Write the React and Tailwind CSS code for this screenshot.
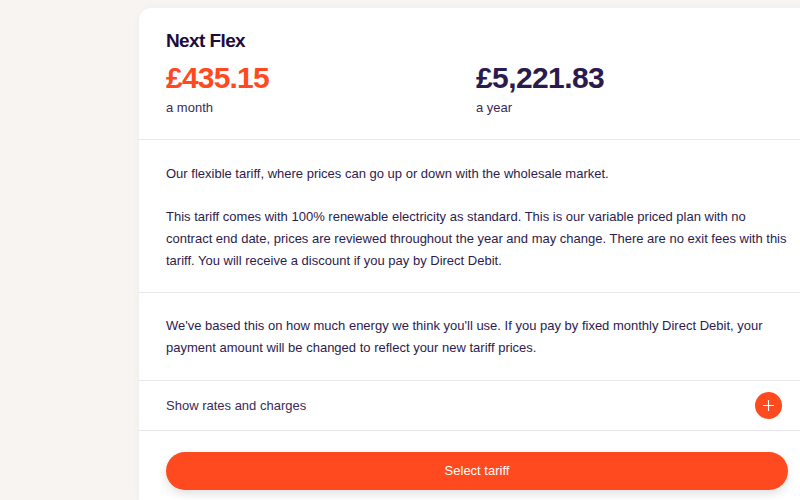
import { Plus } from "lucide-react"

function App() {
  return (
    <div
      className="w-[800px] h-[500px] overflow-hidden bg-[#f7f4f1] flex pl-[139px] pt-2 text-[#2d1b4e]"
      style={{ fontFamily: '"Liberation Sans", Arial, sans-serif' }}>
      <div className="w-[676px] shrink-0 bg-white rounded-t-xl shadow-[0_0_8px_rgba(0,0,0,0.04)] flex flex-col">
        <div className="px-[27px] pt-[21px] pb-[21px] border-b border-[#e8e6ea]">
          <h2 className="text-[19px] font-bold tracking-[-0.6px] text-[#1e0b3d] leading-6">Next Flex</h2>
          <div className="flex mt-[7px]">
            <div className="w-[310px]">
              <p className="text-[30px] font-bold tracking-[-0.8px] leading-9 text-[#ff4a1f]">£435.15</p>
              <p className="text-[13px] mt-[2px] text-[#3b2a58]">a month</p>
            </div>
            <div>
              <p className="text-[30px] font-bold tracking-[-0.6px] leading-9 text-[#2b1a4d]">£5,221.83</p>
              <p className="text-[13px] mt-[2px] text-[#3b2a58]">a year</p>
            </div>
          </div>
        </div>

        <div className="px-[27px] pt-[23px] pb-[20px] border-b border-[#e8e6ea] text-[13px] leading-[22px]">
          <p>Our flexible tariff, where prices can go up or down with the wholesale market.</p>
          <p className="mt-[21px]">
            This tariff comes with 100% renewable electricity as standard. This is our variable priced plan with no contract end date, prices are reviewed throughout the year and may change. There are no exit fees with this tariff. You will receive a discount if you pay by Direct Debit.
          </p>
        </div>

        <div className="px-[27px] pt-[22px] pb-[21px] border-b border-[#e8e6ea] text-[13px] leading-[22px]">
          <p>
            We've based this on how much energy we think you'll use. If you pay by fixed monthly Direct Debit, your payment amount will be changed to reflect your new tariff prices.
          </p>
        </div>

        <div className="pl-[27px] pr-[33px] h-[50px] flex items-center justify-between border-b border-[#e8e6ea]">
          <span className="text-[13px] text-[#3b2a58] translate-y-[1px]">Show rates and charges</span>
          <button className="w-[27px] h-[27px] rounded-full bg-[#ff4a1f] text-white flex items-center justify-center">
            <Plus size={17} strokeWidth={1.6} />
          </button>
        </div>

        <div className="px-[27px] pt-[21px]">
          <button className="w-full h-[38px] rounded-full bg-[#ff4a1f] text-white text-[13px] shadow-[0_4px_10px_rgba(0,0,0,0.12)]">
            Select tariff
          </button>
        </div>
      </div>
    </div>
  )
}

export default App
